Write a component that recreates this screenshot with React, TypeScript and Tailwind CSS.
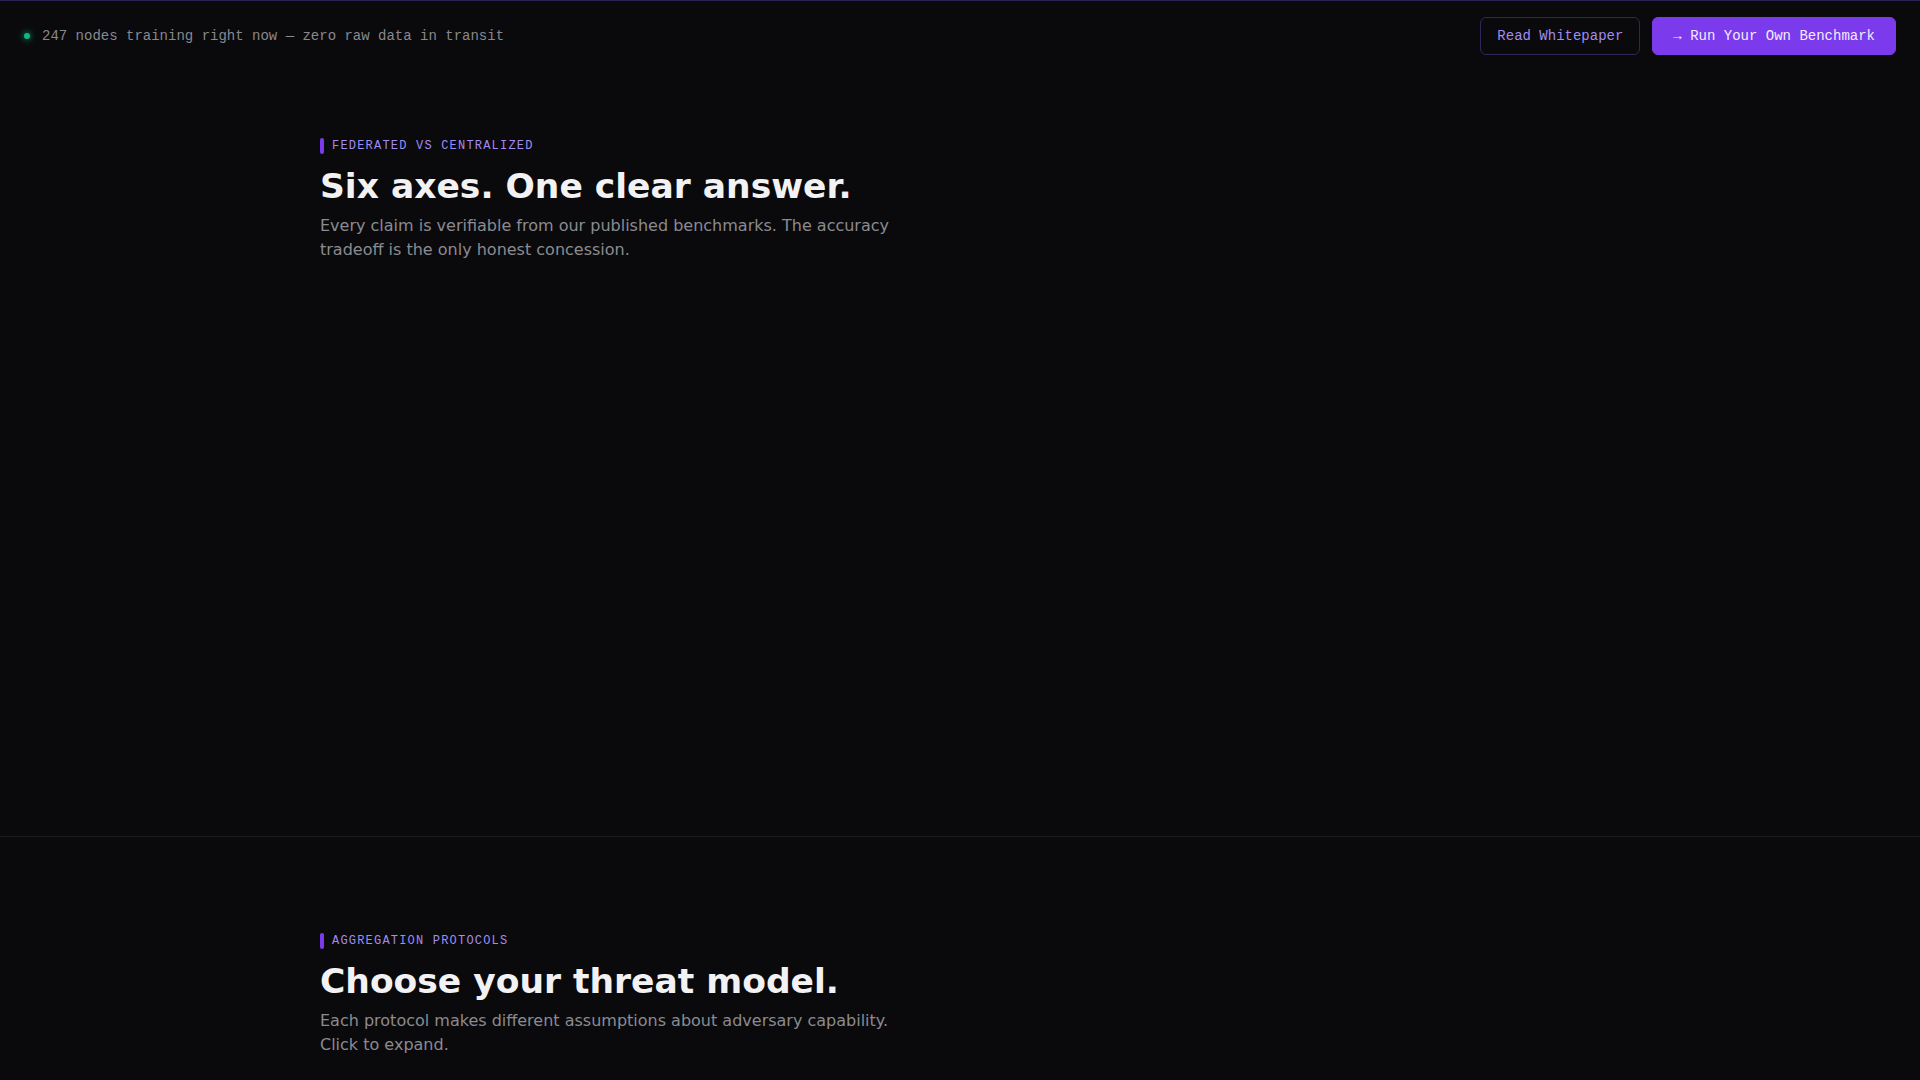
import React from "react";

const mono = "font-['Liberation_Mono',monospace]";
const sans = "font-['DejaVu_Sans',sans-serif]";

interface SectionHeaderProps {
  eyebrow: string;
  title: string;
  lede: string;
}

function SectionHeader({ eyebrow, title, lede }: SectionHeaderProps) {
  return (
    <div>
      <div className="flex items-center gap-2 h-4">
        <span className="w-1 h-4 rounded-full bg-[#7c3aed]" />
        <span className={`${mono} text-[12px] tracking-[0.1em] uppercase text-[#a08cf2]`}>
          {eyebrow}
        </span>
      </div>
      <h2 className={`${sans} mt-3 text-[34.5px] leading-10 font-bold text-[#f2f2f4]`}>{title}</h2>
      <p className={`${sans} mt-2 max-w-xl text-base leading-6 text-[#8b8b91]`}>{lede}</p>
    </div>
  );
}

function TopBar() {
  return (
    <header className="border-t border-[#2a2452]">
      <div className="h-[70px] px-6 flex items-center justify-between">
        <div className={`${mono} flex items-center gap-3 text-sm text-[#88888f]`}>
          <span className="w-1.5 h-1.5 rounded-full bg-[#10b981] shadow-[0_0_6px_#10b981]" />
          <span>247 nodes training right now — zero raw data in transit</span>
        </div>
        <div className={`${mono} flex items-center gap-3 text-sm`}>
          <button className="h-[38px] px-4 rounded-md border border-[#2d2858] text-[#a08cf2] bg-transparent">
            Read Whitepaper
          </button>
          <button className="h-[38px] px-5 rounded-md border border-[#7c3aed] bg-[#7c3aed] text-[#f1ecff]">
            → Run Your Own Benchmark
          </button>
        </div>
      </div>
    </header>
  );
}

export default function App() {
  return (
    <div className="min-h-screen bg-[#0a0a0c]">
      <TopBar />

      <section className="pt-[67px] pb-24">
        <div className="max-w-7xl mx-auto">
          <SectionHeader
            eyebrow="Federated vs Centralized"
            title="Six axes. One clear answer."
            lede="Every claim is verifiable from our published benchmarks. The accuracy tradeoff is the only honest concession."
          />
          <div className="h-[478px]" />
        </div>
      </section>

      <section className="border-t border-[#1b1b20] py-24">
        <div className="max-w-7xl mx-auto">
          <SectionHeader
            eyebrow="Aggregation Protocols"
            title="Choose your threat model."
            lede="Each protocol makes different assumptions about adversary capability. Click to expand."
          />
          <div className="h-[400px]" />
        </div>
      </section>
    </div>
  );
}
